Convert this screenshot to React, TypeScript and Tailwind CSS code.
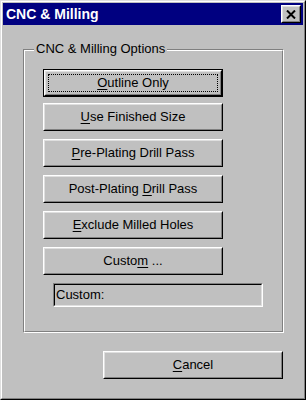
import type { ReactNode } from 'react';

// ─── Win95 style pieces ───────────────────────────────────────────────────────
function Button({ children, focused, className = '' }: { children: ReactNode; focused?: boolean; className?: string }) {
    const label = <span className="whitespace-pre">{children}</span>;
    return (
        <div className={`h-[28px] w-[180px] flex text-[13px] text-black ${focused ? 'border border-black' : ''} ${className}`}>
            <div className="flex-1 flex border border-t-white border-l-white border-b-black border-r-black">
                <div className="flex-1 flex border border-t-[#dfdfdf] border-l-[#dfdfdf] border-b-[#808080] border-r-[#808080] bg-[#c0c0c0]">
                    {focused ? (
                        <div className="flex-1 m-[2px] border border-dotted border-black flex items-center justify-center">
                            {label}
                        </div>
                    ) : (
                        <div className="flex-1 flex items-center justify-center">{label}</div>
                    )}
                </div>
            </div>
        </div>
    );
}

function Mn({ children }: { children: ReactNode }) {
    return <span className="underline underline-offset-2">{children}</span>;
}

const OPTIONS: { pre: string; key: string; post: string }[] = [
    { pre: '', key: 'U', post: 'se Finished Size' },
    { pre: '', key: 'P', post: 're-Plating Drill Pass' },
    { pre: 'Post-Plating ', key: 'D', post: 'rill Pass' },
    { pre: '', key: 'E', post: 'xclude Milled Holes' },
    { pre: 'Custo', key: 'm', post: ' ...' },
];

export default function App() {
    return (
        <div
            className="w-[306px] h-[400px] bg-[#c0c0c0] border border-t-[#dfdfdf] border-l-[#dfdfdf] border-b-black border-r-black"
            style={{ fontFamily: '"Liberation Sans", Arial, sans-serif' }}
        >
            <div className="h-full border border-t-white border-l-white border-b-[#808080] border-r-[#808080] p-px flex flex-col">
                {/* ── Title bar ── */}
                <div className="h-[22px] bg-[#000080] flex items-center justify-between pl-[3px] pr-[2px]">
                    <span className="text-white font-bold text-[14px] leading-none">CNC &amp; Milling</span>
                    <div className="w-[20px] h-[18px] flex border border-t-white border-l-white border-b-black border-r-black">
                        <div className="flex-1 flex items-center justify-center bg-[#c0c0c0] border border-t-[#dfdfdf] border-l-[#dfdfdf] border-b-[#808080] border-r-[#808080]">
                            <svg width="10" height="9" viewBox="0 0 10 9">
                                <path d="M1 0.5 L9 8.5 M9 0.5 L1 8.5" stroke="black" strokeWidth="2" />
                            </svg>
                        </div>
                    </div>
                </div>

                {/* ── Group box ── */}
                <div className="relative mt-[24px] ml-[20px] w-[261px] h-[284px] border border-t-[#808080] border-l-[#808080] border-b-white border-r-white">
                    <div className="h-full border border-t-white border-l-white border-b-[#808080] border-r-[#808080] pt-[18px] pl-[18px] flex flex-col">
                        <Button focused><Mn>O</Mn>utline Only</Button>
                        {OPTIONS.map((o, i) => (
                            <Button key={o.post} className={i === 0 ? 'mt-[6px]' : 'mt-[8px]'}>
                                {o.pre}<Mn>{o.key}</Mn>{o.post}
                            </Button>
                        ))}
                        <div className="mt-[8px] ml-[10px] w-[210px] h-[24px] flex border border-t-[#808080] border-l-[#808080] border-b-white border-r-white">
                            <div className="flex-1 flex items-center border border-t-black border-l-black border-b-[#dfdfdf] border-r-[#dfdfdf] pl-[1px] text-[13px] text-black">
                                Custom:
                            </div>
                        </div>
                    </div>
                    <span className="absolute -top-[9px] left-[10px] px-[2px] bg-[#c0c0c0] text-[13px] leading-[16px] text-black">
                        CNC &amp; Milling Options
                    </span>
                </div>

                {/* ── Footer ── */}
                <div className="mt-[18px] ml-[100px]">
                    <Button><Mn>C</Mn>ancel</Button>
                </div>
            </div>
        </div>
    );
}
